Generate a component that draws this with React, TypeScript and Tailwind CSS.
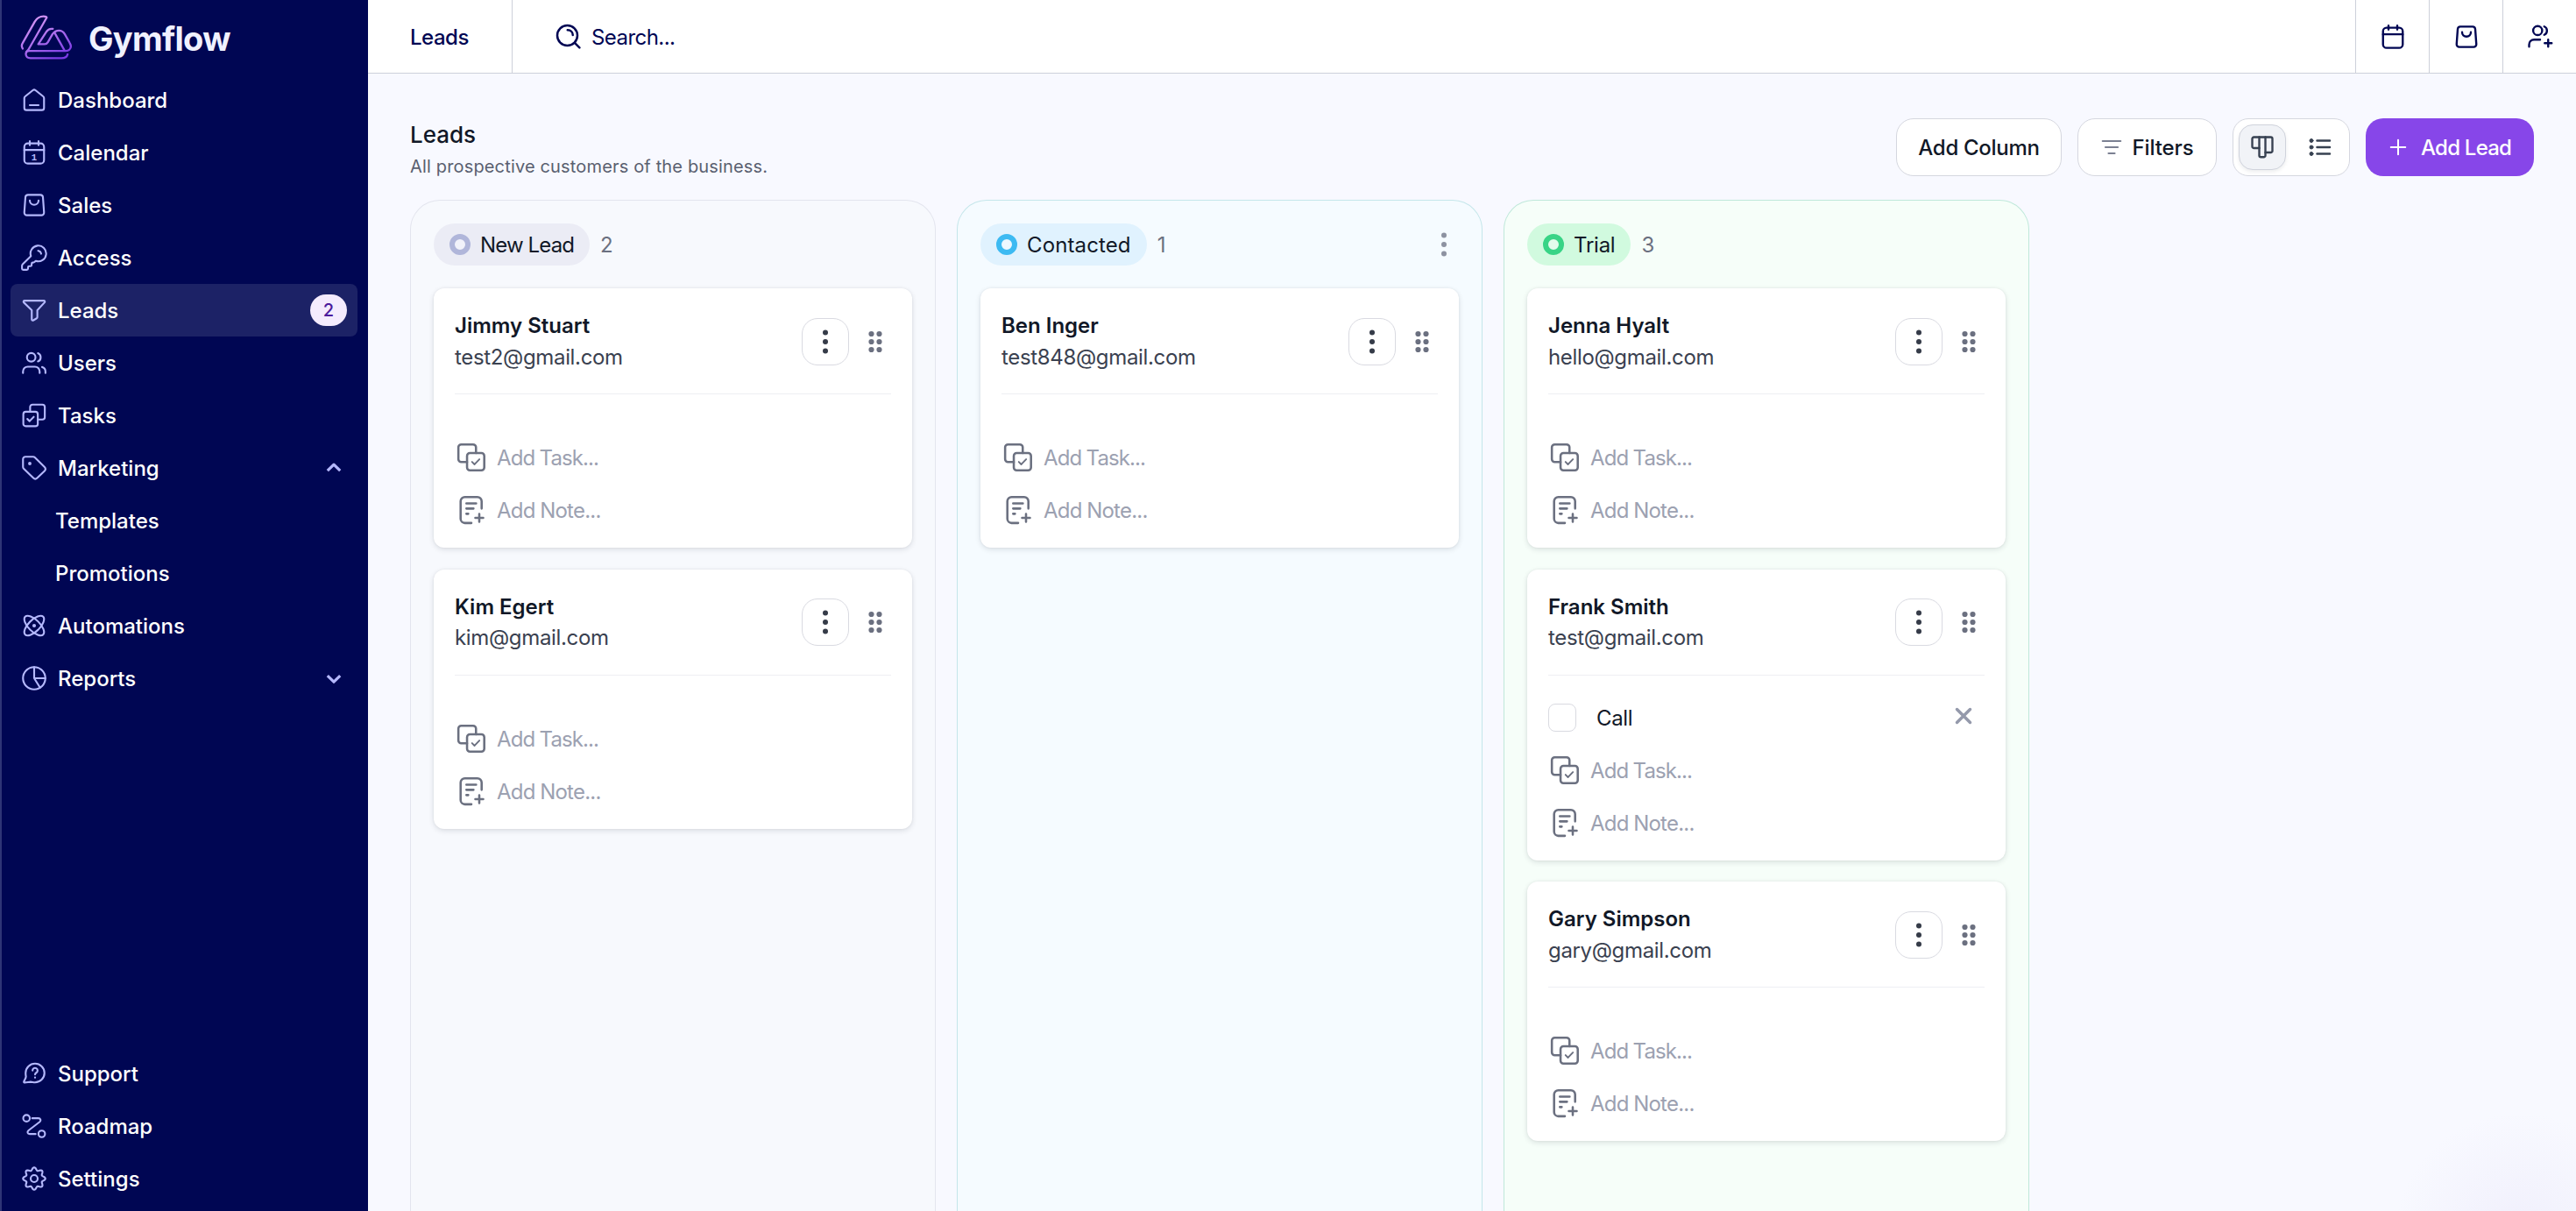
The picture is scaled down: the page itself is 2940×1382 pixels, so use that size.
import clsx from "clsx";

interface IconProps extends React.SVGProps<SVGSVGElement> {
  children?: React.ReactNode;
}

function Icon({ className, children, ...props }: IconProps) {
  return (
    <svg
      viewBox="0 0 24 24"
      fill="none"
      stroke="currentColor"
      strokeWidth={1.7}
      strokeLinecap="round"
      strokeLinejoin="round"
      aria-hidden="true"
      className={clsx("shrink-0", className)}
      {...props}
    >
      {children}
    </svg>
  );
}

const HomeIcon = (props: IconProps) => (
  <Icon {...props}>
    <path d="M3 10.4a2 2 0 0 1 .8-1.6l7-5.6a2 2 0 0 1 2.4 0l7 5.6a2 2 0 0 1 .8 1.6v8.9a2 2 0 0 1-2 2H5a2 2 0 0 1-2-2z" />
    <path d="M8 16.8h8" />
  </Icon>
);

const CalendarIcon = ({ day, ...props }: IconProps & { day?: string }) => (
  <Icon {...props}>
    <rect x="3" y="3.7" width="18" height="18.4" rx="3.2" />
    <path d="M8 1.7v3.6M16 1.7v3.6M3 9.7h18" />
    {day && (
      <text
        x="12"
        y="18.9"
        textAnchor="middle"
        fill="currentColor"
        stroke="none"
        className="font-['Liberation_Mono',monospace] text-[8.5px] font-bold"
      >
        {day}
      </text>
    )}
  </Icon>
);

const BagIcon = (props: IconProps) => (
  <Icon {...props}>
    <path d="M6.4 2.7h11.2a2.4 2.4 0 0 1 2.4 2.2l1 13.8a2.4 2.4 0 0 1-2.4 2.6H5.4A2.4 2.4 0 0 1 3 18.7L4 4.900a2.4 2.4 0 0 1 2.4-2.2z" />
    <path d="M8 7.8a4 4 0 0 0 8 0" />
  </Icon>
);

const KeyIcon = (props: IconProps) => (
  <Icon {...props} viewBox="1.2 1 21.8 21.8" strokeWidth={1.5}>
    <path d="M2.586 17.414A2 2 0 0 0 2 18.828V21a1 1 0 0 0 1 1h3a1 1 0 0 0 1-1v-1a1 1 0 0 1 1-1h1a1 1 0 0 0 1-1v-1a1 1 0 0 1 1-1h.172a2 2 0 0 0 1.414-.586l.814-.814a6.5 6.5 0 1 0-4-4z" />
    <path d="M15.4 6.2a3 3 0 0 1 2.5 2.5" />
  </Icon>
);

const FunnelIcon = (props: IconProps) => (
  <Icon {...props}>
    <path d="M3.2 3.3h17.6c.9 0 1.3 1 .7 1.6L14.9 12v6.4c0 .5-.2.8-.6 1l-3 1.8c-.7.4-1.5 0-1.5-.8V12L2.5 4.9c-.6-.6-.2-1.6.7-1.6z" />
  </Icon>
);

const UsersIcon = (props: IconProps) => (
  <Icon {...props}>
    <circle cx="9.3" cy="7" r="3.9" />
    <path d="M15.4 3.2c3.4 1.2 3.4 6.4 0 7.6M1.8 21.3v-1.4a4.3 4.3 0 0 1 4.3-4.3h6.6a4.3 4.3 0 0 1 4.3 4.3v1.4M19.2 15.9c2 .6 3.1 2.1 3.1 4v1.4" />
  </Icon>
);

const UserPlusIcon = (props: IconProps) => (
  <Icon {...props}>
    <circle cx="9.8" cy="6.3" r="4.1" />
    <path d="M15.8 2.6c3.3 1.2 3.3 6.4 0 7.6M2 21v-1.8c0-2.7 1.9-4.6 4.6-4.6H12M19.4 14.6V21M16.2 17.8h6.4" />
  </Icon>
);

const TasksIcon = (props: IconProps) => (
  <Icon {...props}>
    <rect x="2.1" y="8.7" width="13.2" height="13.2" rx="2.2" />
    <path d="M8.3 8.7V4.4a2.2 2.2 0 0 1 2.2-2.2h9a2.2 2.2 0 0 1 2.2 2.2v9.2a2.2 2.2 0 0 1-2.2 2.2h-4.2" />
    <path d="m5.8 15.3 2 2 3.8-3.9" />
  </Icon>
);

const AddTaskIcon = (props: IconProps) => (
  <Icon {...props}>
    <rect x="8.7" y="8.7" width="13.1" height="13.1" rx="2.2" />
    <path d="M8.7 15.5H4.3a2.2 2.2 0 0 1-2.2-2.2v-9a2.2 2.2 0 0 1 2.2-2.2h9a2.2 2.2 0 0 1 2.2 2.2v4.4" />
    <path d="m12.5 15.4 1.9 1.9 3.7-3.9" strokeWidth={1.3} />
  </Icon>
);

const AddNoteIcon = (props: IconProps) => (
  <Icon {...props}>
    <path d="M19.8 10.9V5.3a3.2 3.2 0 0 0-3.2-3.2H7a3.2 3.2 0 0 0-3.2 3.2v13.4A3.2 3.2 0 0 0 7 21.9h5" />
    <path d="M8.2 7h7.4M8.2 10.9h5.4M8.2 14.9h1.4M18 15v6M15 18h6" />
  </Icon>
);

const TagIcon = (props: IconProps) => (
  <Icon {...props}>
    <path d="M12.586 2.386A2 2 0 0 0 11.172 1.8H4a2.2 2.2 0 0 0-2.2 2.2v7.172a2 2 0 0 0 .586 1.414l8.904 8.704a2.426 2.426 0 0 0 3.42 0l6.78-6.58a2.426 2.426 0 0 0 0-3.42z" />
    <circle cx="8" cy="8" r=".7" fill="currentColor" />
  </Icon>
);

const AtomIcon = (props: IconProps) => (
  <Icon {...props}>
    <circle cx="12" cy="12" r=".8" fill="currentColor" />
    <path d="M20.2 20.2c2.04-2.03.02-7.36-4.5-11.9-4.54-4.52-9.87-6.54-11.9-4.5-2.04 2.03-.02 7.36 4.5 11.9 4.54 4.52 9.87 6.54 11.9 4.5Z" />
    <path d="M15.7 15.7c4.52-4.54 6.54-9.87 4.5-11.9-2.03-2.04-7.36-.02-11.9 4.5-4.52 4.54-6.54 9.87-4.5 11.9 2.03 2.04 7.36.02 11.9-4.5Z" />
  </Icon>
);

const PieIcon = (props: IconProps) => (
  <Icon {...props}>
    <circle cx="12" cy="12" r="10.2" />
    <path d="M12 1.8V12h10.2M12 12l5.4 8.6" />
  </Icon>
);

const SupportIcon = (props: IconProps) => (
  <Icon {...props}>
    <path d="M12.8 3a8.6 8.6 0 0 1 0 17.2c-1.6 0-2.7-.5-4.1-.5-2 .1-3.6.7-5.6.6-.5 0-.7-.4-.5-.8.6-1.6 1.9-3 1.9-4.7-.2-1-.3-1.7-.3-3.2A8.6 8.6 0 0 1 12.8 3z" />
    <path d="M10.5 9.3a2.3 2.3 0 1 1 3.6 1.900c-.8.5-1.3.9-1.3 1.7" />
    <circle cx="12.8" cy="15.7" r=".4" fill="currentColor" strokeWidth={1} />
  </Icon>
);

const RoadmapIcon = (props: IconProps) => (
  <Icon {...props}>
    <circle cx="5" cy="4.9" r="3" />
    <circle cx="18.9" cy="19.2" r="3" />
    <path d="M10.2 4.9h5.6c2 0 2.8 1.9 1.3 3.3L6.9 16c-1.6 1.4-1 3.3 1 3.3h5.4" />
  </Icon>
);

// eight soft teeth round the hub
const GEAR = Array.from({ length: 97 }, (_, i) => {
  const a = (i / 96) * Math.PI * 2;
  const r = 8.9 + 1.3 * Math.cos(8 * a);
  return `${(12 + r * Math.sin(a)).toFixed(2)} ${(12 - r * Math.cos(a)).toFixed(2)}`;
}).join("L");

const GearIcon = (props: IconProps) => (
  <Icon {...props}>
    <path d={`M${GEAR}Z`} />
    <circle cx="12" cy="12" r="3.2" />
  </Icon>
);

const ChevronIcon = ({ open }: { open: boolean }) => (
  <Icon className="mr-[3px] size-6" strokeWidth={3.2} strokeLinecap="butt">
    {open ? <path d="M4.8 15.2 12 8.2l7.200 7" /> : <path d="M4.8 9.2 12 16.2l7.2-7" />}
  </Icon>
);

const SearchIcon = () => (
  <Icon className="size-[30px]" strokeWidth={2}>
    <circle cx="11.6" cy="10.8" r="9.2" />
    <path d="m18.3 17.5 4.4 4.4M11.8 5.800c2.8 0 4.8 2 4.8 4.600" />
  </Icon>
);

const BoardIcon = () => (
  <Icon className="size-[30px]" strokeWidth={1.9}>
    <path d="M9.2 12.8H4.300a1.500 1.500 0 0 1-1.500-1.500V4.300a1.500 1.500 0 0 1 1.500-1.500h15.400a1.500 1.500 0 0 1 1.500 1.500v11a1.500 1.500 0 0 1-1.500 1.500h-4.900" />
    <path d="M9.200 2.800v16.700a1.500 1.500 0 0 0 1.500 1.500h2.600a1.500 1.500 0 0 0 1.500-1.500V2.800" />
  </Icon>
);

const ListIcon = () => (
  <Icon className="size-[30px]" strokeWidth={2}>
    <path d="M9.2 6h11.600M9.200 12h11.600M9.200 18h11.600" />
    <g fill="currentColor" strokeWidth={0.8}>
      <circle cx="4" cy="6" r="1.6" />
      <circle cx="4" cy="12" r="1.6" />
      <circle cx="4" cy="18" r="1.6" />
    </g>
  </Icon>
);

const FilterLinesIcon = () => (
  <Icon className="size-6 text-[#7b8092]" strokeWidth={2.2}>
    <path d="M1.800 5h20.400M5 12h14M8.500 19h7" />
  </Icon>
);

function KebabIcon({ className }: { className?: string }) {
  return (
    <svg viewBox="0 0 8 30" fill="currentColor" aria-hidden="true" className={clsx("h-[30px] w-2", className)}>
      <circle cx="4" cy="4.500" r="3" />
      <circle cx="4" cy="15" r="3" />
      <circle cx="4" cy="25.500" r="3" />
    </svg>
  );
}

function GripIcon() {
  return (
    <svg viewBox="0 0 24 30" fill="currentColor" aria-hidden="true" className="mr-1.5 h-[30px] w-6 text-[#6b7080]">
      {[6, 15, 24].map((y) => (
        <g key={y}>
          <circle cx="7.5" cy={y} r="3.1" />
          <circle cx="16.5" cy={y} r="3.1" />
        </g>
      ))}
    </svg>
  );
}

function Logo() {
  return (
    <svg viewBox="70 49 180 154" fill="none" aria-hidden="true" className="h-[51px] w-[60px]">
      <defs>
        <linearGradient id="logo" x1="110" y1="50" x2="190" y2="203" gradientUnits="userSpaceOnUse">
          <stop offset="0" stopColor="#d99bf5" />
          <stop offset="0.5" stopColor="#b072ee" />
          <stop offset="1" stopColor="#7c3be6" />
        </linearGradient>
      </defs>
      <g stroke="url(#logo)" strokeWidth="7" strokeLinecap="round" strokeLinejoin="round">
        <path d="M78 165Q72 156 78 146L120 72Q131 54 150 54Q160 54 161 58L103 160Q99 169 91 176" />
        <path d="M182 97Q167 95 160 107L132 150H154Q161 150 165 143L181 115Q190 103 203 103Q216 103 223 115L240 145Q249 160 239 169Q235 173 226 173H100Q89 173 89 184Q90 198 105 198H212Q230 198 233 185" />
        <path d="M189 112L222 171" />
      </g>
    </svg>
  );
}

interface NavItem {
  label: string;
  icon: React.ComponentType<any>;
  day?: string;
  badge?: string;
  active?: boolean;
  open?: boolean;
  children?: string[];
}

const NAV: NavItem[] = [
  { label: "Dashboard", icon: HomeIcon },
  { label: "Calendar", icon: CalendarIcon, day: "1" },
  { label: "Sales", icon: BagIcon },
  { label: "Access", icon: KeyIcon },
  { label: "Leads", icon: FunnelIcon, badge: "2", active: true },
  { label: "Users", icon: UsersIcon },
  { label: "Tasks", icon: TasksIcon },
  { label: "Marketing", icon: TagIcon, open: true, children: ["Templates", "Promotions"] },
  { label: "Automations", icon: AtomIcon },
  { label: "Reports", icon: PieIcon, open: false },
];

const FOOTER_NAV: NavItem[] = [
  { label: "Support", icon: SupportIcon },
  { label: "Roadmap", icon: RoadmapIcon },
  { label: "Settings", icon: GearIcon },
];

function NavRow({ item }: { item: NavItem }) {
  const { icon: ItemIcon, day } = item;
  return (
    <li>
      <a
        className={clsx(
          "flex h-[60px] items-center rounded-lg px-3 text-[#b4b8fc]",
          item.active && "bg-[#1c2266]"
        )}
      >
        <ItemIcon className="size-[30px]" {...(day ? { day } : {})} />
        <span className="ml-3 flex-1 pt-0.5 text-white">{item.label}</span>
        {item.badge && (
          <span className="flex h-9 w-[42px] items-center justify-center rounded-full bg-[#f4ebfd] text-xl text-[#4b1a9c]">
            {item.badge}
          </span>
        )}
        {item.open !== undefined && <ChevronIcon open={item.open} />}
      </a>
      {item.children && (
        <ul>
          {item.children.map((child) => (
            <li key={child} className="flex h-[60px] items-center pt-0.5 pl-[51px] text-white">
              {child}
            </li>
          ))}
        </ul>
      )}
    </li>
  );
}

function Sidebar() {
  return (
    <aside className="flex w-[420px] shrink-0 flex-col border-l-2 border-[#2f3576] bg-[#000653] pr-3 pb-[7px] pl-2.5 text-2xl font-medium">
      <div className="flex h-[84px] items-center pl-[11px]">
        <Logo />
        <span className="ml-[18px] pt-[3px] text-[38px] leading-none font-bold tracking-[-0.018em] text-[#f0f1ff]">
          Gymflow
        </span>
      </div>
      <ul className="flex-1">
        {NAV.map((item) => (
          <NavRow key={item.label} item={item} />
        ))}
      </ul>
      <ul>
        {FOOTER_NAV.map((item) => (
          <NavRow key={item.label} item={item} />
        ))}
      </ul>
    </aside>
  );
}

function TopBar() {
  return (
    <header className="flex h-[84px] shrink-0 border-b border-[#cdd0da] bg-white text-2xl text-[#000653]">
      <div className="flex w-[165px] items-center border-r border-[#cdd0da] pt-0.5 pl-12 font-medium tracking-[-0.02em]">
        Leads
      </div>
      <div className="flex flex-1 items-center pl-12">
        <SearchIcon />
        <span className="ml-3 pt-0.5 tracking-[-0.023em]">Search...</span>
      </div>
      <div className="flex w-[84px] items-center justify-center border-l border-[#cdd0da]">
        <CalendarIcon className="size-[30px]" strokeWidth={1.9} />
      </div>
      <div className="flex w-[84px] items-center justify-center border-l border-[#cdd0da]">
        <BagIcon className="size-[30px]" strokeWidth={1.9} />
      </div>
      <div className="flex w-[84px] items-center justify-center border-l border-[#cdd0da]">
        <UserPlusIcon className="size-[30px]" strokeWidth={1.9} />
      </div>
    </header>
  );
}

interface Lead {
  name: string;
  email: string;
  tasks?: string[];
}

interface Column {
  title: string;
  menu?: boolean;
  column: string;
  pill: string;
  ring: string;
  leads: Lead[];
}

const COLUMNS: Column[] = [
  {
    title: "New Lead",
    column: "border-[#e3e5ee] bg-[#f7f9fd]",
    pill: "bg-[#ebecf5] tracking-[-0.036em]",
    ring: "border-[#b0b6da] bg-[#f1f2fa]",
    leads: [
      { name: "Jimmy Stuart", email: "test2@gmail.com" },
      { name: "Kim Egert", email: "kim@gmail.com" },
    ],
  },
  {
    title: "Contacted",
    menu: true,
    column: "border-[#c4e6ea] bg-[#f5fbff]",
    pill: "bg-[#e0f2fe] tracking-[0.005em]",
    ring: "border-[#3dbaf2] bg-[#eef8ff]",
    leads: [{ name: "Ben Inger", email: "test848@gmail.com" }],
  },
  {
    title: "Trial",
    column: "border-[#bfe8da] bg-[#f6fef9]",
    pill: "bg-[#d1fadf] tracking-[-0.01em]",
    ring: "border-[#38d486] bg-[#e2fbeb]",
    leads: [
      { name: "Jenna Hyalt", email: "hello@gmail.com" },
      { name: "Frank Smith", email: "test@gmail.com", tasks: ["Call"] },
      { name: "Gary Simpson", email: "gary@gmail.com" },
    ],
  },
];

function LeadCard({ lead }: { lead: Lead }) {
  return (
    <article className="rounded-xl bg-white px-6 pt-[25px] pb-[13px] shadow-[0_2px_6px_rgba(17,24,39,0.12),0_0_3px_rgba(17,24,39,0.06)]">
      <div className="flex items-center border-b border-[#eeeff3] pb-6">
        <div className="flex-1 text-2xl leading-[35.5px]">
          <h3 className="font-semibold text-[#111827]">{lead.name}</h3>
          <p className="tracking-[-0.014em] text-[#3a4150]">{lead.email}</p>
        </div>
        <button className="mr-[18px] flex size-[54px] items-center justify-center rounded-[18px] border border-[#d9dae1] text-[#353b48]">
          <KebabIcon />
        </button>
        <GripIcon />
      </div>
      <div className="pt-[18px] text-2xl">
        {lead.tasks ? (
          lead.tasks.map((task) => (
            <div key={task} className="flex h-[60px] items-center">
              <span className="size-8 rounded-lg border border-[#d9dae1]" />
              <span className="ml-[23px] flex-1 pt-0.5 tracking-[-0.016em] text-[#111827]">{task}</span>
              <Icon className="mr-3 mb-1 size-6 text-[#9499ab]" strokeWidth={3.5}>
                <path d="M4.5 4.5l15 15M19.5 4.500l-15 15" />
              </Icon>
            </div>
          ))
        ) : (
          <div className="h-6" />
        )}
        <div className="flex h-[60px] items-center pl-px tracking-[-0.038em] text-[#9ca1b1] [word-spacing:-0.02em]">
          <AddTaskIcon className="mr-[11px] size-9 text-[#6b7080]" />
          <span className="pt-0.5">Add Task...</span>
        </div>
        <div className="flex h-[60px] items-center pl-px tracking-[-0.032em] text-[#9ca1b1] [word-spacing:-0.02em]">
          <AddNoteIcon className="mr-[11px] size-9 text-[#6b7080]" />
          <span className="pt-0.5">Add Note...</span>
        </div>
      </div>
    </article>
  );
}

function BoardColumn({ column }: { column: Column }) {
  return (
    <section
      className={clsx(
        "w-[600px] rounded-t-[34px] border border-b-0 px-[26px] pt-[26px]",
        column.column
      )}
    >
      <div className="flex h-12 items-center text-2xl">
        <div
          className={clsx(
            "flex h-12 items-center gap-[11px] rounded-full px-[18px] text-[#111827]",
            column.pill
          )}
        >
          <span className={clsx("size-6 rounded-full border-[6px]", column.ring)} />
          <span className="pt-0.5">{column.title}</span>
        </div>
        <span className="ml-3 flex-1 pt-0.5 text-[#6b7080]">{column.leads.length}</span>
        {column.menu && <KebabIcon className="mr-[13px] text-[#8d92a1]" />}
      </div>
      <div className="mt-[26px] flex flex-col gap-[24.5px]">
        {column.leads.map((lead) => (
          <LeadCard key={lead.email} lead={lead} />
        ))}
      </div>
    </section>
  );
}

function Toolbar() {
  return (
    <div className="flex h-[66px] gap-[18px] text-2xl font-medium text-[#111827]">
      <button className="w-[189px] rounded-[20px] border border-[#d5d7df] bg-white pt-0.5 tracking-[-0.012em]">
        Add Column
      </button>
      <button className="flex w-[159px] items-center justify-center gap-3 rounded-[20px] border border-[#d5d7df] bg-white tracking-[-0.005em]">
        <FilterLinesIcon />
        <span className="pt-0.5">Filters</span>
      </button>
      <div className="flex gap-3 rounded-[18px] border border-[#d5d7df] bg-white p-1.5 text-[#374151]">
        <button className="flex w-[54px] items-center justify-center rounded-[16px] border border-[#d0d3dc] bg-[#f1f3f7] shadow-[0_2px_4px_rgba(17,24,39,0.08)]">
          <BoardIcon />
        </button>
        <button className="flex w-[54px] items-center justify-center">
          <ListIcon />
        </button>
      </div>
      <button className="flex w-48 items-center rounded-[20px] bg-[#8746e9] pl-[26px] tracking-[-0.032em] text-white">
        <Icon className="mr-[15px] size-[22px]" strokeWidth={2.2}>
          <path d="M12 3v18M3 12h18" />
        </Icon>
        <span className="pt-0.5">Add Lead</span>
      </button>
    </div>
  );
}

export default function App() {
  return (
    <div className="relative flex h-screen w-full overflow-hidden bg-[#f8f9ff] font-['Inter','Liberation_Sans',sans-serif]">
      <Sidebar />
      <div className="flex flex-1 flex-col">
        <TopBar />
        <main className="flex flex-1 flex-col px-12 pt-[51px]">
          <div className="flex h-[73px] items-start justify-between">
            <div className="pt-px leading-9">
              <h1 className="text-[26px] leading-9 font-medium text-[#111827]">Leads</h1>
              <p className="text-xl leading-9 tracking-[0.008em] text-[#5a6070]">
                All prospective customers of the business.
              </p>
            </div>
            <Toolbar />
          </div>
          <div className="mt-5 flex flex-1 gap-6">
            {COLUMNS.map((column) => (
              <BoardColumn key={column.title} column={column} />
            ))}
          </div>
        </main>
      </div>
      <div className="pointer-events-none absolute -right-20 -bottom-44 size-72 rounded-full bg-[radial-gradient(closest-side,#f0effc,#f8f9ff00)]" />
    </div>
  );
}
